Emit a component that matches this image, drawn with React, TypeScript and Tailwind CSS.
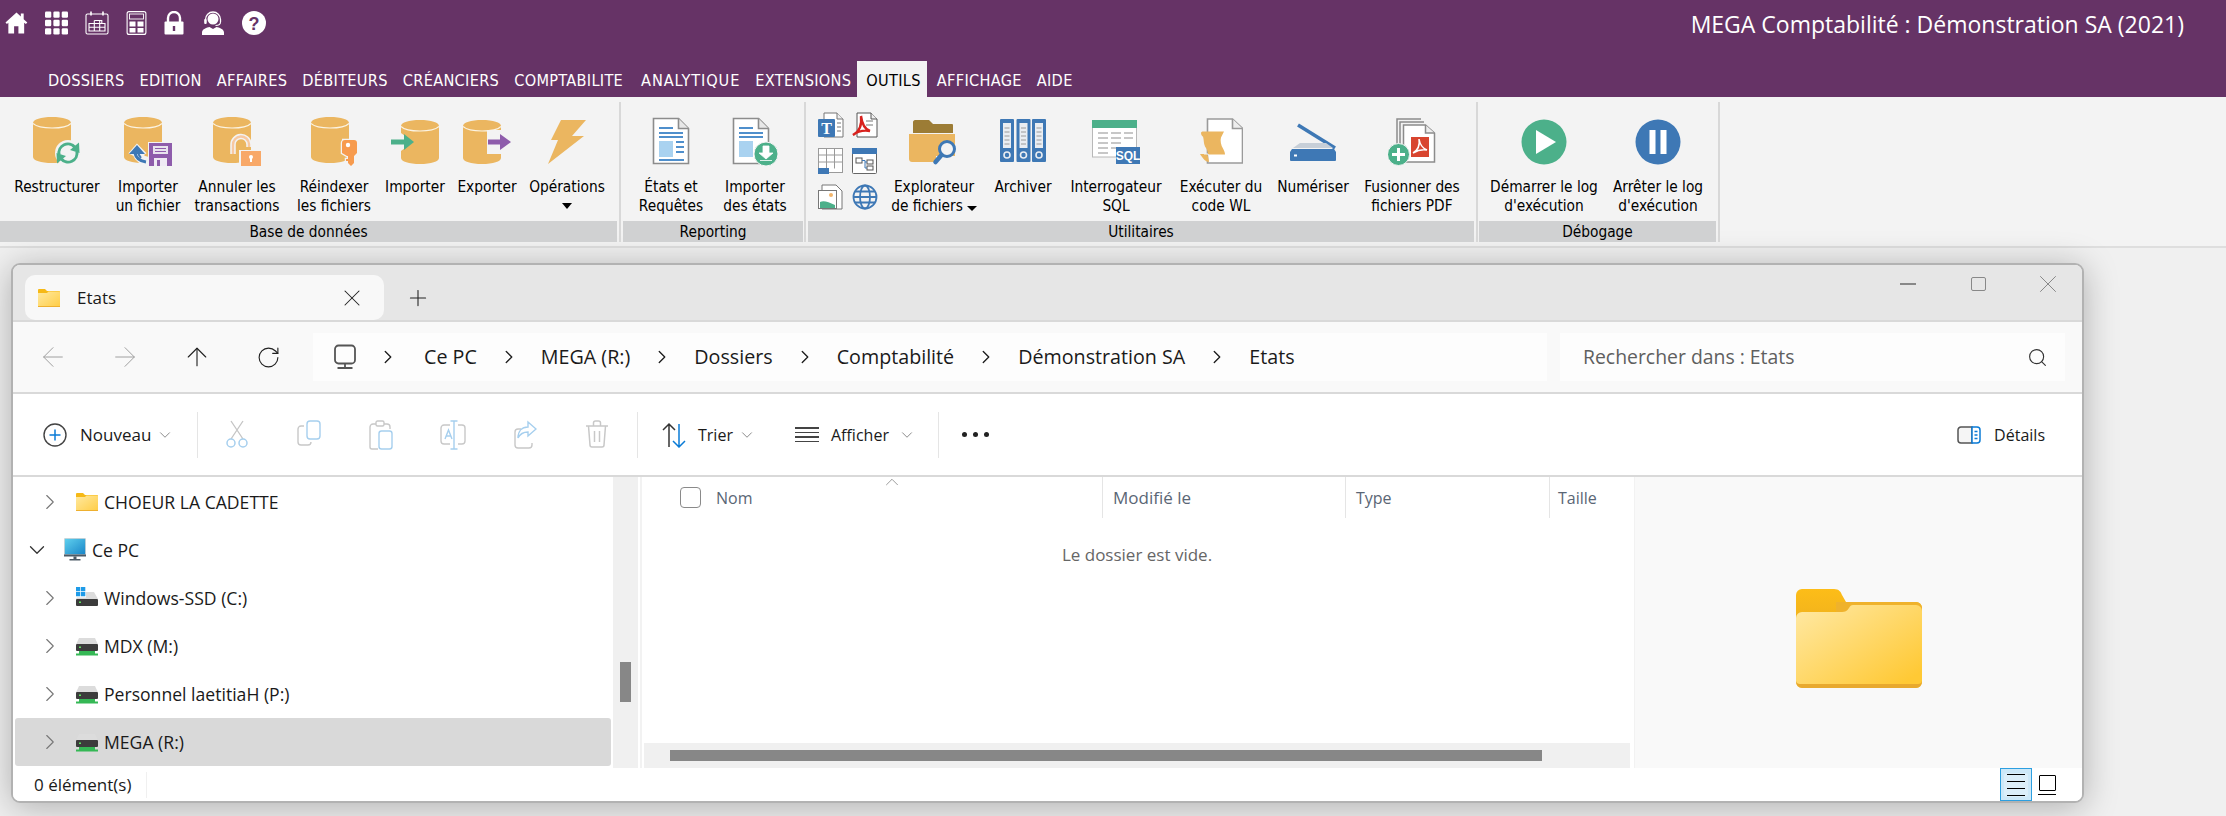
import { ArrowLeft, ArrowRight, ArrowUp, ChevronDown, ChevronRight, ChevronUp, Plus, RotateCw, Search, X } from 'lucide-react';

const menus = ['DOSSIERS', 'EDITION', 'AFFAIRES', 'DÉBITEURS', 'CRÉANCIERS', 'COMPTABILITE', 'ANALYTIQUE', 'EXTENSIONS'];

const GOLD = '#ebb660';
const BLUE = '#3e78b5';
const GREEN = '#4cb08a';
const BG = '#f3f3f3';

// top bar icons
function HomeIcon() {
  return (
    <svg width="23" height="24" viewBox="0 0 24 24" fill="#fff">
      <path d="M12 1 0.500 11.500 2 13l1.500-1.300V23h6v-7.500h4.500V23h6V11.700L21.800 13l1.500-1.500L19.500 8V2h-3v3.200z" />
    </svg>
  );
}

function GridIcon() {
  const cells = [0, 8, 16];
  return (
    <svg width="23" height="24" viewBox="0 0 22 22" fill="#fff">
      {cells.map((y) => cells.map((x) => <rect key={`${x}-${y}`} x={x} y={y} width="6" height="6" rx="1.200" />))}
    </svg>
  );
}

function CalendarIcon() {
  return (
    <svg width="24" height="24" viewBox="0 0 24 24" fill="none" stroke="#fff">
      <rect x="1" y="3" width="22" height="20" rx="1.500" strokeWidth="1.100" />
      <path d="M6 0.500v4M18 0.500v4" strokeWidth="1.600" />
      <path d="M4 12.500h16V20H4zM9.300 9.500V20M14.700 9.500V20M9.300 9.500h7.500v3M4 16.200h16" strokeWidth="1.100" />
    </svg>
  );
}

function CalcIcon() {
  return (
    <svg width="21" height="24" viewBox="0 0 20 24" fill="none">
      <rect x="0.600" y="0.600" width="18.800" height="22.800" rx="2" stroke="#fff" strokeWidth="1.100" />
      <rect x="3" y="3" width="14" height="5" stroke="#fff" strokeWidth="0.900" />
      <path d="M3 10.500h6v5H3zM11 10.500h6v5h-6zM3 17h6v4.500H3zM11 17h6v4.500h-6z" fill="#fff" />
    </svg>
  );
}

function LockIcon() {
  return (
    <svg width="20" height="24" viewBox="0 0 20 24">
      <path d="M4 11V7a6 6 0 0 1 12 0v4" fill="none" stroke="#fff" strokeWidth="2.400" />
      <rect x="0.500" y="10.500" width="19" height="13" rx="1" fill="#fff" />
      <path d="M8.800 15h2.400v5H8.800z" fill="#663366" />
    </svg>
  );
}

function SupportIcon() {
  return (
    <svg width="24" height="24" viewBox="0 0 24 24">
      <circle cx="12" cy="8" r="5.500" fill="#fff" />
      <path d="M4.500 11V8.500a7.500 7.500 0 0 1 15 0V11" fill="none" stroke="#fff" strokeWidth="1.300" />
      <path d="M19.500 11c0 2-2 3.500-5 3.500" fill="none" stroke="#fff" strokeWidth="1.100" />
      <rect x="3.200" y="8" width="2.500" height="5" rx="1" fill="#fff" />
      <path d="M1 24v-2.500C1 18 6 16.500 8.500 16l3.500 2 3.500-2c2.500 .5 7.500 2 7.500 5.500V24z" fill="#fff" />
    </svg>
  );
}

function HelpIcon() {
  return (
    <svg width="24" height="24" viewBox="0 0 24 24">
      <circle cx="12" cy="12" r="12" fill="#fff" />
      <text x="12" y="18.500" textAnchor="middle" fontSize="18" fontWeight="700" fontFamily="Liberation Sans" fill="#663366">?</text>
    </svg>
  );
}

// ribbon icons, 48x50 box
function Cylinder({ x = 0, y = 1, h = 46 }: { x?: number; y?: number; h?: number }) {
  return (
    <g transform={`translate(${x} ${y})`}>
      <path d={`M0 6C0 2.500 8 0 19 0s19 2.500 19 6v${h - 12}c0 3.500-8 6-19 6S0 ${h - 2.500} 0 ${h - 6}z`} fill={GOLD} />
      <path d="M0 6.500c3 3 10 4.500 19 4.500s16-1.500 19-4.500" fill="none" stroke="#fbf3e2" strokeWidth="1.200" />
    </g>
  );
}

function RestructureIcon() {
  return (
    <svg width="48" height="50" viewBox="0 0 48 50">
      <Cylinder />
      <circle cx="35" cy="37" r="13" fill={BG} />
      <path d="M26.100 38.600a9 9 0 0 1 15.800-7.400" fill="none" stroke={GREEN} strokeWidth="3" />
      <path d="M46 26.500l.5 10.500-9.500-3z" fill={GREEN} />
      <g transform="rotate(180 35 37)">
        <path d="M26.100 38.600a9 9 0 0 1 15.800-7.400" fill="none" stroke={GREEN} strokeWidth="3" />
        <path d="M46 26.500l.5 10.500-9.500-3z" fill={GREEN} />
      </g>
    </svg>
  );
}

function ImportFileIcon() {
  return (
    <svg width="48" height="50" viewBox="0 0 48 50">
      <Cylinder />
      <path d="M6 37l7-8 8 8-3 2c2 2 4 3 7 3v6c-7 0-13-3-15-9z" fill={BG} stroke={BG} strokeWidth="2" />
      <path d="M11 37c1 5 4 8 11 9" fill="none" stroke={BLUE} strokeWidth="3.200" />
      <path d="M17 42c-2-2-3-4-3-8" fill="none" stroke={BLUE} strokeWidth="2" />
      <path d="M5 38l8-9 8 9z" fill={BLUE} />
      <rect x="24" y="26" width="25" height="25" fill={BG} />
      <rect x="25" y="27" width="23" height="23" fill="#8e5cab" />
      <path d="M29 30h15v8H29z" fill="#e8e3ee" />
      <path d="M31 32.500h11M31 35.500h11" stroke="#8e5cab" />
      <rect x="30" y="42" width="13" height="8" fill="#efeaf4" />
      <rect x="33" y="44" width="3" height="6" fill="#8e5cab" />
    </svg>
  );
}

function CancelIcon() {
  return (
    <svg width="48" height="50" viewBox="0 0 48 50">
      <Cylinder />
      <path d="M20 38v-9a8 8 0 0 1 16-1v3" fill="none" stroke={BG} strokeWidth="5.500" />
      <path d="M20 38v-9a8 8 0 0 1 16-1v3" fill="none" stroke="#f8c8a0" strokeWidth="2.400" />
      <rect x="26" y="34" width="22" height="16" fill={BG} />
      <rect x="28" y="35" width="20" height="15" fill="#f8a868" />
      <circle cx="38" cy="41" r="2" fill="#fff" />
      <path d="M37 41h2v5h-2z" fill="#fff" />
    </svg>
  );
}

function ReindexIcon() {
  return (
    <svg width="46" height="50" viewBox="0 0 46 50">
      <Cylinder />
      <path d="M31 24h12a3 3 0 0 1 3 3v10l-3 3v7l-3 3-3-3v-2h-2v-2h2v-3h-1l-5-3V27a3 3 0 0 1 3-3z" fill="#f79b4e" stroke={BG} strokeWidth="2.500" paintOrder="stroke" />
      <circle cx="37" cy="29" r="2.200" fill="#fff" />
    </svg>
  );
}

function ImportIcon() {
  return (
    <svg width="48" height="50" viewBox="0 0 48 50">
      <Cylinder x={10} y={4} h={44} />
      <path d="M0 17h10l12 9-12 9H0z" fill={BG} />
      <path d="M0 23.500h13V18l10 8-10 8v-5.500H0z" fill={GREEN} />
    </svg>
  );
}

function ExportIcon() {
  return (
    <svg width="48" height="50" viewBox="0 0 48 50">
      <Cylinder x={0} y={4} h={44} />
      <path d="M24 14h14v24H24z" fill={BG} />
      <path d="M25 23.500h12V18l11 8-11 8v-5.500H25z" fill="#8e5cab" />
    </svg>
  );
}

function BoltIcon() {
  return (
    <svg width="40" height="50" viewBox="0 0 40 50">
      <path d="M14 4h25L25 20h12L1 48l10-24H4z" fill={GOLD} />
    </svg>
  );
}

function StatesIcon() {
  return (
    <svg width="38" height="50" viewBox="0 0 38 50">
      <path d="M1.500 2.500h25l10 10v35h-35z" fill="#fff" stroke="#8c8c8c" strokeWidth="1.600" />
      <path d="M26.500 2.500v10h10" fill="#e8e8e8" stroke="#8c8c8c" strokeWidth="1.600" />
      <path d="M7 12h14M7 17h24M7 21h24" stroke="#4f8fcc" strokeWidth="1.800" />
      <rect x="7" y="25" width="14" height="16" fill="#a9d2f0" />
      <path d="M24 26h8M24 31h8M24 36h8M7 44h25" stroke="#4f8fcc" strokeWidth="1.800" />
    </svg>
  );
}

function ImportStatesIcon() {
  return (
    <svg width="46" height="50" viewBox="0 0 46 50">
      <path d="M1.500 2.500h25l10 10v35h-35z" fill="#fff" stroke="#8c8c8c" strokeWidth="1.600" />
      <path d="M26.500 2.500v10h10" fill="#e8e8e8" stroke="#8c8c8c" strokeWidth="1.600" />
      <path d="M7 12h14M7 17h24M7 21h24" stroke="#4f8fcc" strokeWidth="1.800" />
      <rect x="7" y="25" width="14" height="16" fill="#a9d2f0" />
      <circle cx="34" cy="38" r="12" fill={GREEN} stroke={BG} strokeWidth="1" />
      <path d="M31 30h6v7h4l-7 6-7-6h4zM28 44.500h12" fill="#fff" stroke="#fff" strokeWidth="0.800" />
    </svg>
  );
}

function ExplorerIcon() {
  return (
    <svg width="50" height="50" viewBox="0 0 50 50">
      <path d="M4 6c0-1 1-2 2-2h14l4 4h19a1 1 0 0 1 1 1v8H4z" fill="#9c7c35" />
      <path d="M0 18h46v22H27v6H3c-1.500 0-3-1-3-3z" fill={GOLD} />
      <circle cx="38" cy="33" r="7.500" fill={BG} stroke={BLUE} strokeWidth="3" />
      <path d="M32.500 39l-6 7" stroke={BLUE} strokeWidth="4.500" strokeLinecap="round" />
    </svg>
  );
}

function BindersIcon() {
  const binders = [0, 16.500, 32];
  return (
    <svg width="46" height="50" viewBox="0 0 46 50">
      {binders.map((x) => (
        <g key={x} transform={`translate(${x} 3)`}>
          <rect width="14" height="43" rx="1" fill={BLUE} />
          <rect x="3" y="4" width="8" height="25" fill="#e9edf2" />
          <path d="M4.500 9h5M4.500 13h5M4.500 17h5M4.500 21h5M4.500 25h5" stroke="#9a9a9a" />
          <circle cx="7" cy="36" r="3" fill="none" stroke="#e9edf2" strokeWidth="1.600" />
        </g>
      ))}
    </svg>
  );
}

function SqlIcon() {
  return (
    <svg width="48" height="50" viewBox="0 0 48 50">
      <rect x="0.500" y="5" width="44" height="36" fill="#fff" stroke="#b8b8b8" />
      <rect x="0" y="4" width="45" height="8" fill={GREEN} />
      <path d="M6 17h10M19 17h10M32 17h9M6 22h10M19 22h10M32 22h9M6 27h10M19 27h10M6 32h10M19 32h5M6 37h10" stroke="#b5b5b5" strokeWidth="1.500" />
      <rect x="24" y="31" width="24" height="17" fill={BLUE} />
      <text x="36" y="44" textAnchor="middle" fontSize="12" fontWeight="700" fontFamily="Liberation Sans" fill="#fff">SQL</text>
    </svg>
  );
}

function CodeIcon() {
  return (
    <svg width="44" height="50" viewBox="0 0 44 50">
      <path d="M8.500 3h25l10 9.500V47h-35z" fill="#fff" stroke="#9a9a9a" strokeWidth="1.600" />
      <path d="M33.500 3v9.500h10" fill="#eee" stroke="#9a9a9a" strokeWidth="1.600" />
      <path d="M2 17c0-1 1-1.500 2-1.500h21l-3 6c-1 3 0 8 2 11 1 2 2 4 2 6H9c0-3-1-5-3-8-1.500-3-1-7-2-10-1 0-2-2-2-3.500z" fill={GOLD} />
      <path d="M1 38h7c1 2 2 6 2 8-3 0-6-3-9-8z" fill={GOLD} />
      <path d="M5 38h4l1 2" stroke={BG} fill="none" />
    </svg>
  );
}

function ScannerIcon() {
  return (
    <svg width="46" height="50" viewBox="0 0 46 50">
      <path d="M8 9l37 23" stroke={BLUE} strokeWidth="3.600" />
      <path d="M10 27h26l7 5H3z" fill="#c7cfd8" />
      <path d="M2 33h42l2 3v8a1 1 0 0 1-1 1H1a1 1 0 0 1-1-1v-8z" fill={BLUE} />
      <rect x="4" y="38.500" width="3" height="2" fill="#fff" />
    </svg>
  );
}

function MergeIcon() {
  return (
    <svg width="48" height="50" viewBox="0 0 48 50">
      <path d="M9 32V3h24" fill="none" stroke="#8c8c8c" strokeWidth="1.500" />
      <path d="M12 32V6h24" fill="none" stroke="#8c8c8c" strokeWidth="1.500" />
      <path d="M15.500 9h22l9 8v29h-31z" fill="#fff" stroke="#8c8c8c" strokeWidth="1.500" />
      <path d="M37.500 9v8h9" fill="#eee" stroke="#8c8c8c" strokeWidth="1.500" />
      <rect x="23" y="21" width="18" height="20" fill="#d8452f" />
      <path d="M25 37c5-3 7-8 6-14 1 6 3 9 8 11-5-1-9 0-14 3z" fill="none" stroke="#fff" strokeWidth="1.500" />
      <circle cx="10.500" cy="38.500" r="11" fill={GREEN} stroke={BG} strokeWidth="1" />
      <path d="M10.500 32v13M4 38.500h13" stroke="#fff" strokeWidth="3" />
    </svg>
  );
}

function PlayIcon() {
  return (
    <svg width="46" height="50" viewBox="0 0 46 46" className="mt-[1px]">
      <circle cx="23" cy="23" r="22.500" fill={GREEN} />
      <path d="M15 11l20 12-20 12z" fill="#fff" />
    </svg>
  );
}

function PauseIcon() {
  return (
    <svg width="46" height="50" viewBox="0 0 46 46" className="mt-[1px]">
      <circle cx="23" cy="23" r="22.500" fill={BLUE} />
      <path d="M14.500 11h6v24h-6zM25.500 11h6v24h-6z" fill="#fff" />
    </svg>
  );
}

// small icons of the utilities column
function TextDocIcon() {
  return (
    <svg width="26" height="26" viewBox="0 0 26 26">
      <path d="M6 1h13l6 6v18H6z" fill="#fff" stroke="#777" />
      <path d="M19 1v6h6" fill="#eee" stroke="#777" />
      <path d="M19 11h4M19 15h4M19 19h4" stroke="#777" />
      <rect x="0" y="7" width="17" height="18" rx="1" fill={BLUE} />
      <text x="8.500" y="22" textAnchor="middle" fontSize="16" fontWeight="700" fontFamily="Liberation Serif" fill="#fff">T</text>
    </svg>
  );
}

function PdfDocIcon() {
  return (
    <svg width="26" height="26" viewBox="0 0 26 26">
      <path d="M5 1h14l6 6v18H5z" fill="#fff" stroke="#555" />
      <path d="M19 1v6h6" fill="#eee" stroke="#555" />
      <path d="M1 23c6-3 9-10 8-19 1 8 3 13 9 15-6-1-12 0-17 4z" fill="none" stroke="#d8211d" strokeWidth="2.400" />
      <path d="M14 9h7M14 13h7" stroke="#777" />
    </svg>
  );
}

function TableIcon() {
  return (
    <svg width="26" height="26" viewBox="0 0 26 26">
      <rect x="0.500" y="0.500" width="24" height="24" fill="#fff" stroke="#9a9a9a" />
      <path d="M8.500 0.500v20M16.500 0.500v20M0.500 7h24M0.500 14h24" stroke="#9a9a9a" />
      <rect x="0" y="20" width="11" height="6" fill={BLUE} />
    </svg>
  );
}

function TreeIcon() {
  return (
    <svg width="26" height="26" viewBox="0 0 26 26">
      <rect x="0.500" y="0.500" width="24" height="25" rx="1" fill="#fff" stroke="#666" />
      <rect x="0" y="0" width="25" height="6" fill={BLUE} />
      <rect x="4" y="10" width="6" height="5" fill="#fff" stroke="#555" />
      <rect x="15" y="12" width="6" height="4" fill="#fff" stroke="#555" />
      <rect x="15" y="18" width="6" height="4" fill="#fff" stroke="#555" />
      <path d="M10 12.500h3V20h2M13 14h2" fill="none" stroke={BLUE} />
    </svg>
  );
}

function ImageDocIcon() {
  return (
    <svg width="26" height="26" viewBox="0 0 26 26">
      <path d="M4 1h14l6 6v18H4z" fill="#fff" stroke="#777" />
      <rect x="0.500" y="6.500" width="18" height="18" fill="#fff" stroke="#777" />
      <circle cx="13" cy="11" r="2" fill="#f2b56b" />
      <path d="M2 24v-6c4-2 8 0 15 3v3z" fill={GREEN} />
    </svg>
  );
}

function GlobeIcon() {
  return (
    <svg width="26" height="26" viewBox="0 0 26 26" fill="none" stroke={BLUE} strokeWidth="1.800">
      <circle cx="13" cy="13" r="11.500" />
      <ellipse cx="13" cy="13" rx="5" ry="11.500" />
      <path d="M1.500 13h23M3 7.500h20M3 18.500h20" />
    </svg>
  );
}

type RibbonItem = { cls: string; icon: React.ReactNode; lines: string[]; caret?: boolean };

function RibbonButton({ cls, icon, lines, caret }: RibbonItem) {
  return (
    <div className={`flex flex-col items-center shrink-0 ${cls}`}>
      <div className="flex h-[50px] items-start justify-center">{icon}</div>
      <div className="mt-[12px] text-center leading-[19px] whitespace-nowrap">
        {lines.map((l) => <div key={l}>{l}</div>)}
        {caret && <div className="mx-auto mt-[6px] h-0 w-0 border-x-[5px] border-t-[6px] border-x-transparent border-t-black" />}
      </div>
    </div>
  );
}

function RibbonGroup({ cls, title, children }: { cls: string; title: string; children: React.ReactNode }) {
  return (
    <div className={`flex h-[140px] flex-col shrink-0 ${cls}`}>
      <div className="flex flex-1 pt-[14px]">{children}</div>
      <div className="flex h-[21px] items-center justify-center bg-[#d0d1d2] pt-[2px] leading-none">{title}</div>
    </div>
  );
}

function Ribbon() {
  return (
    <div className="flex h-[151px] items-start border-b-2 border-[#dedede] bg-[#f3f3f3] pt-[5px] font-['DejaVu_Sans_Condensed','DejaVu_Sans',sans-serif] text-[15.300px] text-black [font-stretch:condensed]">
      <RibbonGroup cls="w-[617px]" title="Base de données">
        <RibbonButton cls="ml-[12px] w-[90px]" icon={<RestructureIcon />} lines={['Restructurer']} />
        <RibbonButton cls="w-[92px]" icon={<ImportFileIcon />} lines={['Importer', 'un fichier']} />
        <RibbonButton cls="w-[86px]" icon={<CancelIcon />} lines={['Annuler les', 'transactions']} />
        <RibbonButton cls="ml-[10px] w-[88px]" icon={<ReindexIcon />} lines={['Réindexer', 'les fichiers']} />
        <RibbonButton cls="w-[74px]" icon={<ImportIcon />} lines={['Importer']} />
        <RibbonButton cls="w-[70px]" icon={<ExportIcon />} lines={['Exporter']} />
        <RibbonButton cls="w-[90px]" icon={<BoltIcon />} lines={['Opérations']} caret />
      </RibbonGroup>
      <div className="ml-[2px] mr-[2px] h-[140px] w-[2px] bg-[#d8d8d8]" />
      <RibbonGroup cls="w-[180px]" title="Reporting">
        <RibbonButton cls="ml-[10px] w-[76px]" icon={<StatesIcon />} lines={['États et', 'Requêtes']} />
        <RibbonButton cls="ml-[8px] w-[76px]" icon={<ImportStatesIcon />} lines={['Importer', 'des états']} />
      </RibbonGroup>
      <div className="ml-[1px] mr-[2px] h-[140px] w-[2px] bg-[#d8d8d8]" />
      <RibbonGroup cls="w-[666px]" title="Utilitaires">
        <div className="-mt-[6px] ml-[6px] grid h-[102px] w-[68px] shrink-0 grid-cols-2 place-items-center content-between py-[2px]">
          <TextDocIcon />
          <PdfDocIcon />
          <TableIcon />
          <TreeIcon />
          <ImageDocIcon />
          <GlobeIcon />
        </div>
        <div className="ml-[7px] flex w-[90px] shrink-0 flex-col items-center">
          <div className="flex h-[50px] items-start justify-center"><ExplorerIcon /></div>
          <div className="mt-[12px] text-center leading-[19px] whitespace-nowrap">
            <div>Explorateur</div>
            <div className="flex items-center justify-center gap-[4px]">
              de fichiers
              <span className="mt-[3px] h-0 w-0 border-x-[5px] border-t-[5px] border-x-transparent border-t-black" />
            </div>
          </div>
        </div>
        <RibbonButton cls="ml-[9px] w-[70px]" icon={<BindersIcon />} lines={['Archiver']} />
        <RibbonButton cls="ml-[13px] w-[90px]" icon={<SqlIcon />} lines={['Interrogateur', 'SQL']} />
        <RibbonButton cls="ml-[15px] w-[90px]" icon={<CodeIcon />} lines={['Exécuter du', 'code WL']} />
        <RibbonButton cls="ml-[7px] w-[80px]" icon={<ScannerIcon />} lines={['Numériser']} />
        <RibbonButton cls="ml-[7px] w-[104px]" icon={<MergeIcon />} lines={['Fusionner des', 'fichiers PDF']} />
      </RibbonGroup>
      <div className="ml-[2px] mr-[1px] h-[140px] w-[2px] bg-[#d8d8d8]" />
      <RibbonGroup cls="w-[237px]" title="Débogage">
        <RibbonButton cls="ml-[8px] w-[114px]" icon={<PlayIcon />} lines={['Démarrer le log', "d'exécution"]} />
        <RibbonButton cls="w-[114px]" icon={<PauseIcon />} lines={['Arrêter le log', "d'exécution"]} />
      </RibbonGroup>
      <div className="ml-[2px] h-[140px] w-[2px] bg-[#d8d8d8]" />
    </div>
  );
}

// explorer icons
function FolderSmall() {
  return (
    <svg width="22" height="18" viewBox="0 0 22 18">
      <defs>
        <linearGradient id="fs" x1="0" y1="0" x2="1" y2="1">
          <stop offset="0" stopColor="#ffe9a0" />
          <stop offset="1" stopColor="#ffcd45" />
        </linearGradient>
      </defs>
      <path d="M0 1a1 1 0 0 1 1-1h6l2 2h12a1 1 0 0 1 1 1v2H0z" fill="#f6b916" />
      <path d="M0 4h9l1.500-1.500H21a1 1 0 0 1 1 1V17a1 1 0 0 1-1 1H1a1 1 0 0 1-1-1z" fill="url(#fs)" />
      <path d="M0 17h22v1H0z" fill="#eeb02f" />
    </svg>
  );
}

function FolderLarge() {
  return (
    <svg width="126" height="99" viewBox="0 0 126 99">
      <defs>
        <linearGradient id="fl" x1="0" y1="0" x2="1" y2="1">
          <stop offset="0" stopColor="#ffe9a5" />
          <stop offset="0.900" stopColor="#ffc935" />
        </linearGradient>
        <linearGradient id="ft" x1="0" y1="0" x2="0" y2="1">
          <stop offset="0" stopColor="#fdbd18" />
          <stop offset="1" stopColor="#eeb01e" />
        </linearGradient>
      </defs>
      <path d="M0 6a6 6 0 0 1 6-6h32c5 0 7 3 8 6l4 7h70a6 6 0 0 1 6 6v20H0z" fill="url(#ft)" />
      <path d="M40 13h80a6 6 0 0 1 6 6v10H40z" fill="#efb22c" />
      <path d="M0 29a6 6 0 0 1 6-6h40c3 0 5-1 7-4 1-2 2-3 4-3h63a6 6 0 0 1 6 6v71a6 6 0 0 1-6 6H6a6 6 0 0 1-6-6z" fill="url(#fl)" />
      <path d="M0 93v0a6 6 0 0 0 6 6h114a6 6 0 0 0 6-6v-1a4 4 0 0 1-4 3H4a4 4 0 0 1-4-3z" fill="#e8a92e" />
    </svg>
  );
}

function Drive({ kind }: { kind: 'win' | 'net' }) {
  return (
    <svg width="22" height="22" viewBox="0 0 22 22">
      {kind === 'win' ? (
        <>
          <path d="M0 0h4.300v4.300H0zM5 0h4.300v4.300H5zM0 5h4.300v4.300H0zM5 5h4.300v4.300H5z" fill="#1e9be8" />
          <path d="M10 5h8l4 7H0l1-1.500h9z" fill="#dcdcdc" />
        </>
      ) : (
        <path d="M3 3h16l3 6.500H0z" fill="#dcdcdc" />
      )}
      <rect x="0" y={kind === 'win' ? 12 : 9} width="22" height="7" rx="1" fill="#3c3c3c" />
      <rect x="3" y={kind === 'win' ? 14.500 : 11.500} width="2" height="1.500" fill="#5fe05f" />
      {kind === 'net' && <path d="M3 16h16v2.500h3v2H0v-2h3z" fill="#35b855" />}
    </svg>
  );
}

function MonitorColor() {
  return (
    <svg width="22" height="24" viewBox="0 0 22 24">
      <defs>
        <linearGradient id="mc" x1="0" y1="0" x2="1" y2="1">
          <stop offset="0" stopColor="#5fd0ee" />
          <stop offset="1" stopColor="#1a86c8" />
        </linearGradient>
      </defs>
      <rect x="0" y="0" width="22" height="18" rx="1" fill="#d8d8d8" />
      <rect x="0.800" y="0.800" width="20.400" height="15.500" fill="url(#mc)" />
      <rect x="0" y="16.500" width="22" height="2" fill="#4c5a66" />
      <path d="M9.500 18.500h3V21h4v1.500h-11V21h4z" fill="#4c5a66" />
    </svg>
  );
}

function MonitorLine() {
  return (
    <svg width="24" height="26" viewBox="0 0 24 26" fill="none" stroke="#555" strokeWidth="1.800">
      <rect x="2" y="1.500" width="20" height="18" rx="3.500" />
      <path d="M12 19.500v4M4.500 24h15" />
    </svg>
  );
}

function Scissors() {
  return (
    <svg width="24" height="28" viewBox="0 0 24 28" fill="none">
      <path d="M6 19 18 1M18 19 6 1" stroke="#c4c4c4" strokeWidth="1.300" />
      <circle cx="6" cy="23" r="4" stroke="#a6cfee" strokeWidth="1.500" />
      <circle cx="18" cy="23" r="4" stroke="#a6cfee" strokeWidth="1.500" />
    </svg>
  );
}

function CopyIcon() {
  return (
    <svg width="24" height="26" viewBox="0 0 24 26" fill="none" strokeWidth="1.400">
      <rect x="10" y="1" width="13" height="18" rx="3" stroke="#a6cfee" />
      <path d="M7 6H4a3 3 0 0 0-3 3v13a3 3 0 0 0 3 3h7a3 3 0 0 0 3-3" stroke="#c8c8c8" />
    </svg>
  );
}

function PasteIcon() {
  return (
    <svg width="24" height="30" viewBox="0 0 24 30" fill="none" strokeWidth="1.400">
      <path d="M7 4H4a3 3 0 0 0-3 3v20a2 2 0 0 0 2 2h6M15 4h3a3 3 0 0 1 3 3v2" stroke="#c8c8c8" />
      <rect x="7" y="1" width="8" height="5" rx="1.500" stroke="#c8c8c8" />
      <rect x="10" y="11" width="13" height="18" rx="2.500" stroke="#a6cfee" />
    </svg>
  );
}

function RenameIcon() {
  return (
    <svg width="26" height="30" viewBox="0 0 26 30" fill="none" strokeWidth="1.400">
      <path d="M10 5H4a3 3 0 0 0-3 3v13a3 3 0 0 0 3 3h6M18 5h4a3 3 0 0 1 3 3v13a3 3 0 0 1-3 3h-4" stroke="#c8c8c8" />
      <path d="M14 1v28M10.500 1h7M10.500 29h7" stroke="#a6cfee" />
      <path d="M5 19l3.500-9L12 19M6 16h5" stroke="#a6cfee" />
    </svg>
  );
}

function ShareIcon() {
  return (
    <svg width="24" height="30" viewBox="0 0 24 30" fill="none" strokeWidth="1.400">
      <path d="M8 9H5a3 3 0 0 0-3 3v13a3 3 0 0 0 3 3h11a3 3 0 0 0 3-3v-2" stroke="#c8c8c8" />
      <path d="M15 2l8 7-8 7v-4c-5 0-8 2-10 6 0-7 4-11 10-11z" stroke="#a6cfee" />
    </svg>
  );
}

function TrashIcon() {
  return (
    <svg width="22" height="28" viewBox="0 0 22 28" fill="none" stroke="#c8c8c8" strokeWidth="1.500">
      <path d="M0 6h22M7.500 6V3a2 2 0 0 1 2-2h3a2 2 0 0 1 2 2v3M2.500 6l1.500 19a2 2 0 0 0 2 2h10a2 2 0 0 0 2-2l1.500-19M8.500 11v11M13.500 11v11" />
    </svg>
  );
}

function SortIcon() {
  return (
    <svg width="24" height="26" viewBox="0 0 24 26" fill="none" strokeWidth="1.500">
      <path d="M7 25V2M1 8l6-6 6 6" stroke="#333" />
      <path d="M17 2v23M11 19l6 6 6-6" stroke="#0a7bd6" />
    </svg>
  );
}

function DetailsIcon() {
  return (
    <svg width="24" height="18" viewBox="0 0 24 18" fill="none">
      <path d="M15 1H4a3 3 0 0 0-3 3v10a3 3 0 0 0 3 3h11z" fill="#f5f5f5" stroke="#555" strokeWidth="1.500" />
      <path d="M15 1h5a3 3 0 0 1 3 3v10a3 3 0 0 1-3 3h-5z" fill="#fff" stroke="#0a7bd6" strokeWidth="1.500" />
      <path d="M17.500 5.500h3M17.500 9h3M17.500 12.500h3" stroke="#0a7bd6" strokeWidth="1.300" />
    </svg>
  );
}

const crumbs = ['Ce PC', 'MEGA (R:)', 'Dossiers', 'Comptabilité', 'Démonstration SA', 'Etats'];

function TreeRow({ label, icon, selected }: { label: string; icon: React.ReactNode; selected?: boolean }) {
  return (
    <div className={`mx-[2px] flex h-[48px] items-center rounded-[3px] ${selected ? 'bg-[#d9d9d9]' : ''}`}>
      <ChevronRight size={26} strokeWidth={1} className="ml-[22px] text-[#777]" />
      <div className="ml-[13px] flex w-[22px] justify-center">{icon}</div>
      <span className="ml-[6px] text-[#1a1a1a]">{label}</span>
    </div>
  );
}

function Explorer() {
  return (
    <div className="flex h-[540px] w-[2073px] flex-col overflow-hidden rounded-[9px] border-2 border-[#b2b2b2] bg-white font-['Open_Sans',sans-serif] text-[17px] text-[#1a1a1a] shadow-[0_4px_34px_rgba(0,0,0,0.28)]">
      {/* tabs */}
      <div className="flex h-[57px] shrink-0 border-b-2 border-[#d9d9d9] bg-[#e6e6e6]">
        <div className="ml-[12px] mt-[10px] flex h-[45px] w-[359px] items-center rounded-[10px] bg-[#f8f8f8] pl-[13px]">
          <FolderSmall />
          <span className="ml-[17px]">Etats</span>
          <X size={28} strokeWidth={0.900} className="ml-auto mr-[18px] text-[#222]" />
        </div>
        <Plus size={26} strokeWidth={1} className="ml-[21px] mt-[20px] text-[#222]" />
        <div className="ml-auto mr-[-1px] mt-[11px] flex h-[16px] text-[#888]">
          <div className="flex w-[70px] items-center justify-center"><div className="h-[1.500px] w-[16px] bg-[#888]" /></div>
          <div className="flex w-[70px] items-center justify-center"><div className="h-[14px] w-[15px] rounded-[2px] border-[1.500px] border-[#888]" /></div>
          <div className="flex w-[70px] items-center justify-center"><X size={30} strokeWidth={0.800} className="shrink-0" /></div>
        </div>
      </div>

      {/* address */}
      <div className="flex h-[72px] shrink-0 items-center border-b-2 border-[#d9d9d9] bg-[#f9f9f9] pl-[4px] text-[19.700px]">
        <div className="flex w-[72px] justify-center"><ArrowLeft size={32} strokeWidth={0.750} className="text-[#a0a0a0]" /></div>
        <div className="flex w-[72px] justify-center"><ArrowRight size={32} strokeWidth={0.750} className="text-[#a0a0a0]" /></div>
        <div className="flex w-[71px] justify-center"><ArrowUp size={30} strokeWidth={0.900} className="text-[#222]" /></div>
        <div className="flex w-[72px] justify-center"><RotateCw size={25} strokeWidth={1.100} className="text-[#222]" /></div>
        <div className="ml-[9px] flex h-[48px] w-[1234px] items-center gap-[24px] bg-[#fdfdfd] pl-[20px]">
          <MonitorLine />
          {crumbs.map((c, i) => (
            <div key={c} className={`flex items-center gap-[24px] ${i === 0 ? '-ml-[1px]' : ''}`}>
              <ChevronRight size={22} strokeWidth={1.500} className="-mx-[3px] text-[#222]" />
              <span className={i === 0 ? 'ml-[4px]' : ''}>{c}</span>
            </div>
          ))}
        </div>
        <div className="ml-[13px] flex h-[48px] w-[505px] items-center bg-[#fdfdfd] pl-[23px] pr-[17px] text-[19.400px] text-[#5f5f5f]">
          <span>Rechercher dans : Etats</span>
          <Search size={21} strokeWidth={1.300} className="ml-auto text-[#333]" />
        </div>
      </div>

      {/* commands */}
      <div className="flex h-[83px] shrink-0 items-center border-b-2 border-[#d9d9d9] bg-white">
        <div className="flex w-[184px] items-center pl-[30px]">
          <svg width="24" height="24" viewBox="0 0 24 24" fill="none">
            <circle cx="12" cy="12" r="11" stroke="#444" strokeWidth="1.400" />
            <path d="M12 6.500v11M6.500 12h11" stroke="#0a7bd6" strokeWidth="1.500" />
          </svg>
          <span className="ml-[13px] w-[76px]">Nouveau</span>
          <ChevronDown size={18} strokeWidth={1} className="text-[#666]" />
        </div>
        <div className="h-[46px] w-px bg-[#e5e5e5]" />
        <div className="ml-[3px] flex">
          <div className="flex w-[72px] justify-center"><Scissors /></div>
          <div className="flex w-[72px] justify-center"><CopyIcon /></div>
          <div className="flex w-[72px] justify-center"><PasteIcon /></div>
          <div className="flex w-[72px] justify-center"><RenameIcon /></div>
          <div className="flex w-[72px] justify-center"><ShareIcon /></div>
          <div className="flex w-[72px] justify-center"><TrashIcon /></div>
        </div>
        <div className="ml-[4px] h-[46px] w-px bg-[#e5e5e5]" />
        <div className="ml-[24px]"><SortIcon /></div>
        <span className="ml-[12px] w-[40px] text-[16px]">Trier</span>
        <ChevronDown size={18} strokeWidth={1} className="text-[#666]" />
        <div className="ml-[39px] flex flex-col gap-[3px]">
          <div className="h-[1.500px] w-[24px] bg-[#444]" />
          <div className="h-[1.500px] w-[24px] bg-[#444]" />
          <div className="h-[1.500px] w-[24px] bg-[#444]" />
          <div className="h-[1.500px] w-[24px] bg-[#444]" />
        </div>
        <span className="ml-[12px] w-[67px] text-[16px]">Afficher</span>
        <ChevronDown size={18} strokeWidth={1} className="text-[#666]" />
        <div className="ml-[22px] h-[46px] w-px bg-[#e5e5e5]" />
        <div className="ml-[23px] flex gap-[6px]">
          <div className="h-[5px] w-[5px] rounded-full bg-[#222]" />
          <div className="h-[5px] w-[5px] rounded-full bg-[#222]" />
          <div className="h-[5px] w-[5px] rounded-full bg-[#222]" />
        </div>
        <div className="ml-auto flex items-center pr-[37px] text-[16px]">
          <DetailsIcon />
          <span className="ml-[13px]">Détails</span>
        </div>
      </div>

      {/* panes */}
      <div className="flex h-[291px] shrink-0">
        <div className="w-[600px] shrink-0 overflow-hidden pt-[1px] text-[17.600px]">
          <TreeRow label="CHOEUR LA CADETTE" icon={<FolderSmall />} />
          <div className="flex h-[48px] items-center">
            <ChevronDown size={26} strokeWidth={1.200} className="ml-[11px] text-[#333]" />
            <div className="ml-[14px]"><MonitorColor /></div>
            <span className="ml-[6px]">Ce PC</span>
          </div>
          <TreeRow label="Windows-SSD (C:)" icon={<Drive kind="win" />} />
          <TreeRow label="MDX (M:)" icon={<Drive kind="net" />} />
          <TreeRow label="Personnel laetitiaH (P:)" icon={<Drive kind="net" />} />
          <TreeRow label="MEGA (R:)" icon={<Drive kind="net" />} selected />
        </div>
        <div className="w-[25px] shrink-0 bg-[#f0f0f0] pt-[185px]">
          <div className="mx-auto h-[40px] w-[11px] bg-[#878787]" />
        </div>
        <div className="ml-[2px] w-[2px] shrink-0 bg-[#f2f2f2]" />
        <div className="relative ml-[2px] flex w-[986px] shrink-0 flex-col">
          <div className="flex h-[41px] shrink-0 text-[16px] text-[#5a6675]">
            <div className="flex w-[458px] items-center pl-[36px]">
              <div className="h-[21px] w-[21px] rounded-[4px] border border-[#8a8a8a]" />
              <span className="ml-[15px]">Nom</span>
            </div>
            <div className="flex w-[243px] items-center border-l border-[#e5e5e5] pl-[10px] text-[17px]">Modifié le</div>
            <div className="flex w-[204px] items-center border-l border-[#e5e5e5] pl-[10px]">Type</div>
            <div className="flex flex-1 items-center border-l border-[#e5e5e5] pl-[8px]">Taille</div>
          </div>
          <ChevronUp size={22} strokeWidth={0.800} className="absolute left-[237px] top-[-6px] text-[#777]" />
          <div className="mt-[27px] text-center leading-[20px] text-[#666]">Le dossier est vide.</div>
          <div className="mt-auto flex h-[25px] items-center bg-[#f0f0f0] pl-[26px]">
            <div className="h-[11px] w-[872px] bg-[#878787]" />
          </div>
        </div>
        <div className="ml-[4px] flex flex-1 items-center justify-center border-l border-[#f2f2f2] bg-[#f9f9f9] pt-[32px]">
          <FolderLarge />
        </div>
      </div>

      {/* status */}
      <div className="flex flex-1 items-center bg-white pl-[21px]">
        <span className="w-[112px]">0 élément(s)</span>
        <div className="h-[26px] w-px bg-[#f0f0f0]" />
        <div className="ml-auto flex h-full items-stretch">
          <div className="flex w-[32px] items-center justify-center border border-[#2d9fe0] bg-[#cde8f8]">
            <div className="flex h-[24px] w-[24px] flex-col items-center justify-center gap-[6px] rounded-[3px] bg-[#dceef9]">
              <div className="h-px w-[18px] bg-black" />
              <div className="h-px w-[18px] bg-black" />
              <div className="h-px w-[18px] bg-black" />
              <div className="h-px w-[18px] bg-black" />
            </div>
          </div>
          <div className="ml-[3px] mr-[23px] flex w-[24px] flex-col items-center justify-center">
            <div className="h-[16px] w-[17px] rounded-[1px] border border-black" />
            <div className="mt-[3px] h-px w-[18px] bg-black" />
          </div>
        </div>
      </div>
    </div>
  );
}

export default function App() {
  return (
    <div className="h-[816px] w-[2226px] overflow-hidden bg-[#f0f0f0]">
      <header className="flex h-[97px] flex-col bg-[#663366] font-['DejaVu_Sans_Condensed','DejaVu_Sans',sans-serif] text-white [font-stretch:condensed]">
        <div className="flex h-[46px] items-center pl-[5px] pr-[42px]">
          <div className="flex items-center gap-[17px]">
            <HomeIcon />
            <GridIcon />
            <CalendarIcon />
            <CalcIcon />
            <LockIcon />
            <SupportIcon />
            <HelpIcon />
          </div>
          <div className="ml-auto pt-[2px] font-['Open_Sans',sans-serif] text-[23px] [font-stretch:normal]">MEGA Comptabilité : Démonstration SA (2021)</div>
        </div>
        <nav className="mt-[15px] flex h-[36px] gap-[15px] pl-[48px] text-[16.200px] tracking-[0.300px]">
          {menus.map((m) => (
            <div key={m} className={`flex items-center pt-[4px] ${m === 'ANALYTIQUE' ? 'ml-[3px] tracking-[0.900px]' : ''}`}>{m}</div>
          ))}
          <div className="-ml-[9px] -mr-[5px] flex items-center bg-[#f3f3f3] pl-[9px] pr-[6px] pt-[4px] text-black">OUTILS</div>
          <div className="flex items-center pt-[4px]">AFFICHAGE</div>
          <div className="flex items-center pt-[4px]">AIDE</div>
        </nav>
      </header>
      <Ribbon />
      <div className="pl-[11px] pt-[15px]">
        <Explorer />
      </div>
    </div>
  );
}
